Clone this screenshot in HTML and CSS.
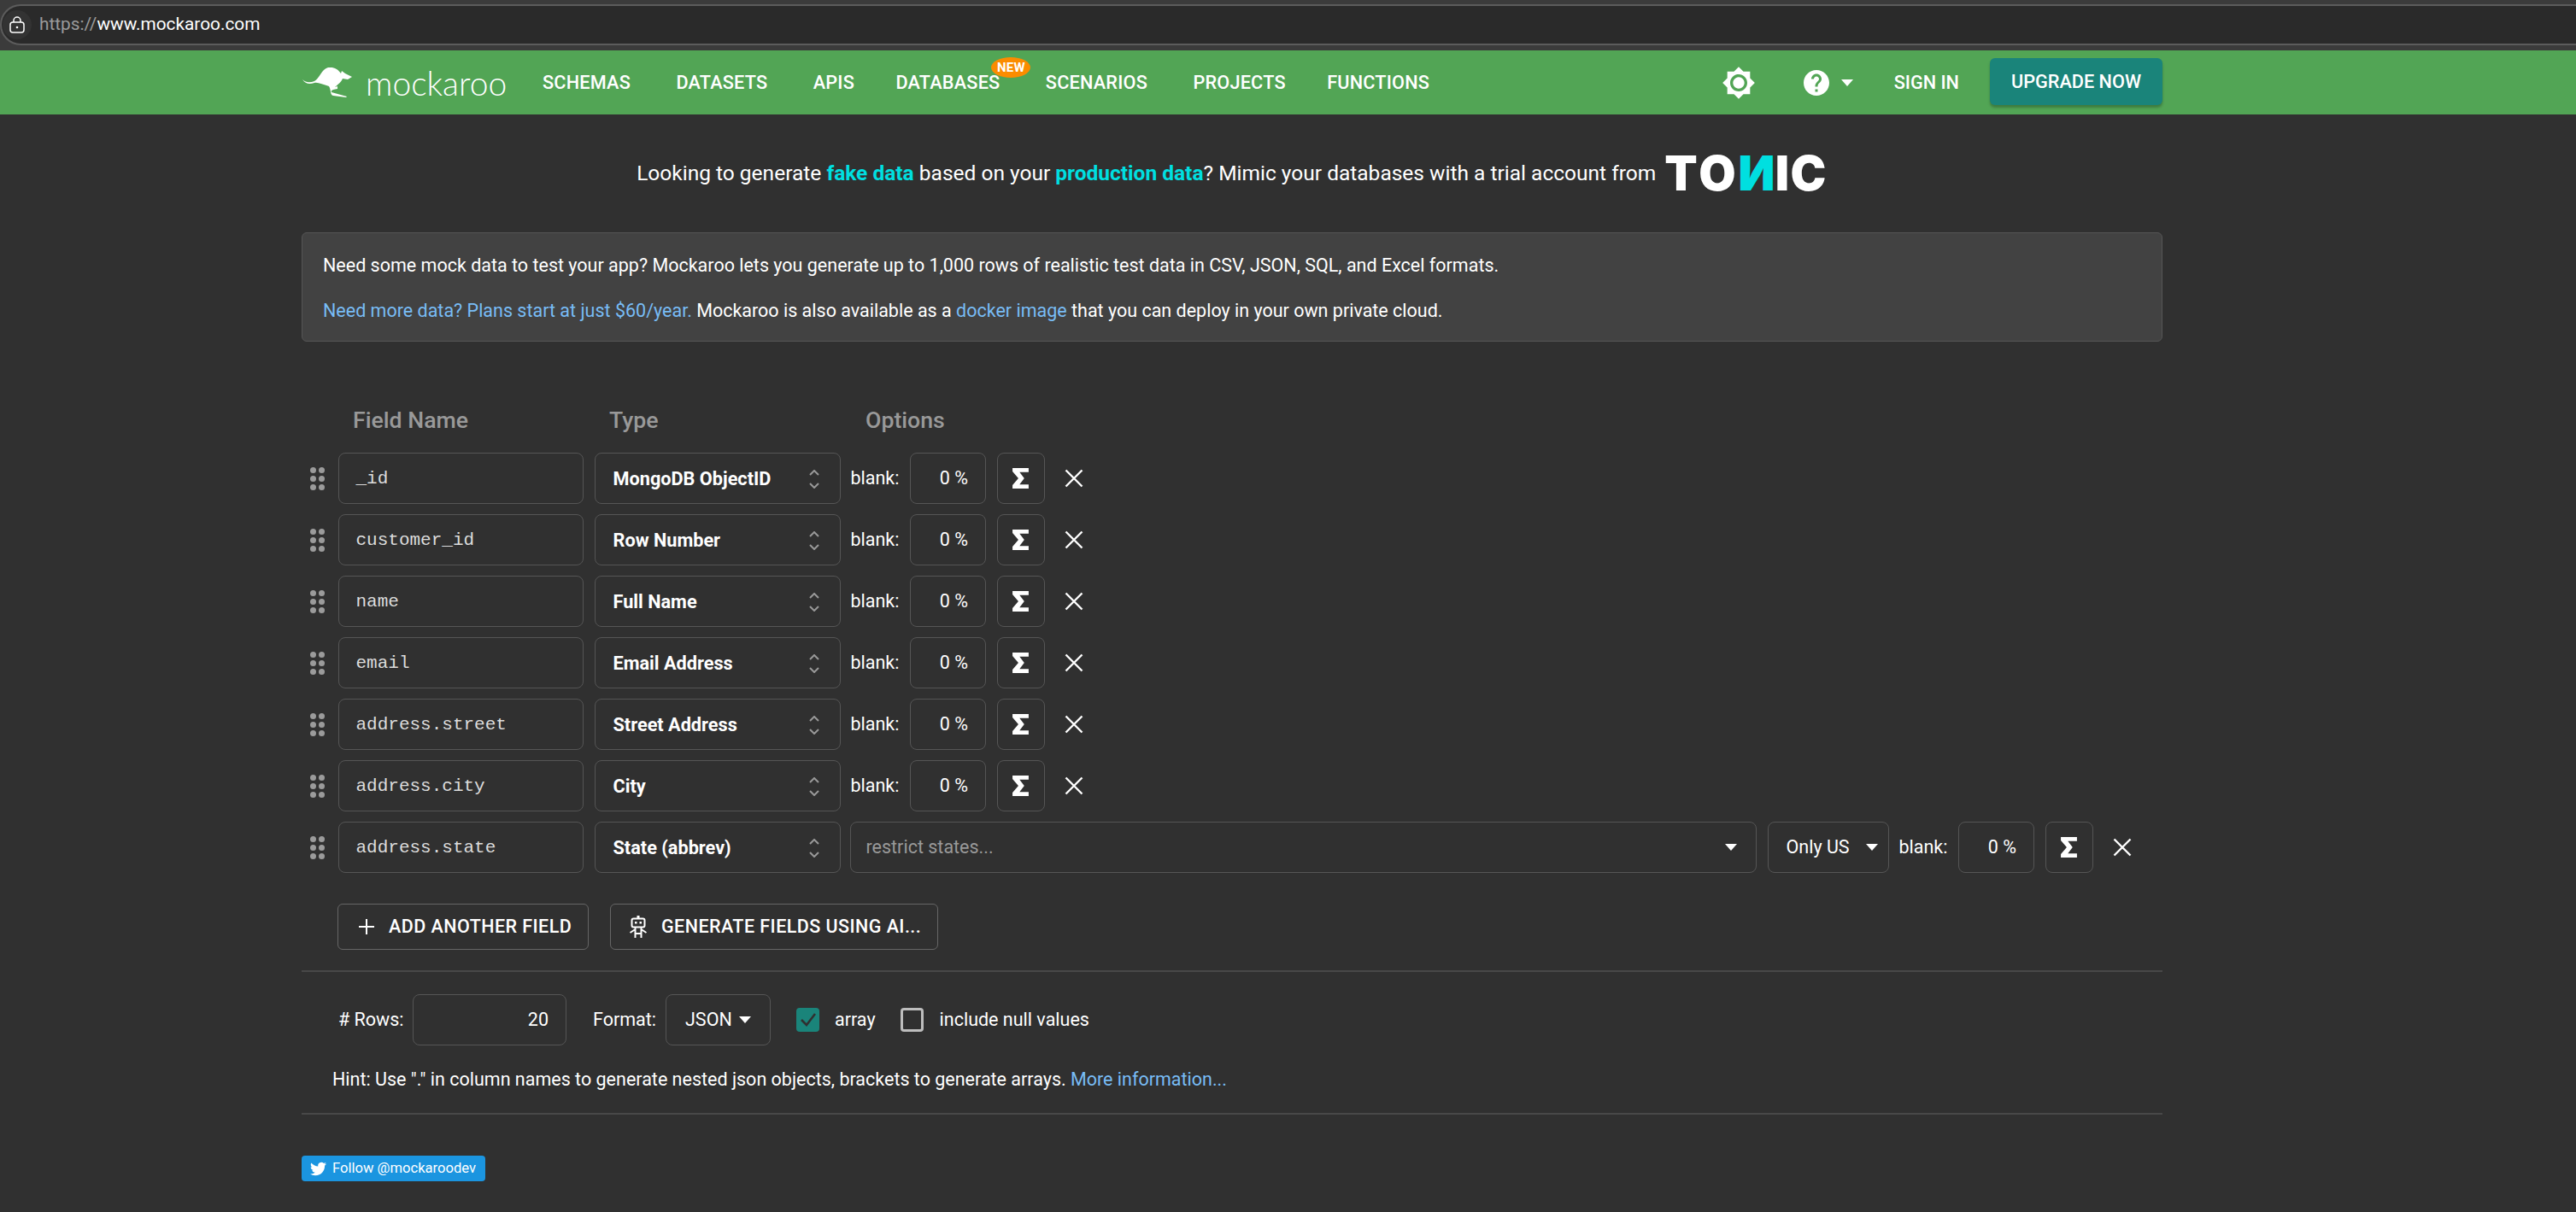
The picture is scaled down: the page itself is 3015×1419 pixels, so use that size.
FILE: index.html
```html
<!DOCTYPE html>
<html lang="en">
<head>
<meta charset="utf-8">
<title>Mockaroo</title>
<link rel="stylesheet" href="styles.css">
</head>
<body>
<div class="browser">
  <div class="address">
    <span class="lock"><svg width="18" height="20" viewBox="0 0 18 20"><rect x="1" y="7" width="16" height="12" rx="3" fill="none" stroke="#fff" stroke-width="1.500"/><path d="M5 7V5a4 4 0 0 1 8 0v2" fill="none" stroke="#fff" stroke-width="1.500"/><circle cx="9" cy="13" r="1.300" fill="#fff"/></svg></span>
    <span class="url"><span class="scheme">https://</span>www.mockaroo.com</span>
  </div>
</div>
<header class="nav">
  <div class="nav-inner">
    <a class="brand">
      <svg class="roo" width="58" height="35" viewBox="0 0 58 35"><path fill="#fff" d="M0 14C4 18 9 18 14 16C20 13 22 2 30 0C38-1 42 3 45 7L46 4L50 7L58 11L53 14L47 13C45 18 41 20 38 23L41 22L41 25C37 26 33 26 34 29L52 34L51 35L36 33C32 32 34 27 31 22C24 20 18 17 14 18C8 20 3 19 0 14Z"/></svg>
      <span class="wordmark">mockaroo</span>
    </a>
    <nav class="links">
      <a>SCHEMAS</a><a>DATASETS</a><a>APIS</a><a class="has-badge tight">DATABASES<span class="badge">NEW</span></a><a>SCENARIOS</a><a>PROJECTS</a><a class="tight">FUNCTIONS</a>
    </nav>
    <div class="nav-right">
      <svg class="sun" width="40" height="40" viewBox="0 0 24 24"><path fill="#fff" d="M20 8.690V4h-4.690L12 .69 8.690 4H4v4.690L.69 12 4 15.310V20h4.690L12 23.310 15.310 20H20v-4.690L23.310 12 20 8.690zM12 18c-3.310 0-6-2.690-6-6s2.690-6 6-6 6 2.690 6 6-2.690 6-6 6zm0-10c-2.210 0-4 1.790-4 4s1.790 4 4 4 4-1.790 4-4-1.790-4-4-4z"/></svg>
      <svg class="help" width="36" height="36" viewBox="0 0 24 24"><path fill="#fff" d="M12 2C6.480 2 2 6.480 2 12s4.480 10 10 10 10-4.480 10-10S17.520 2 12 2zm1 17h-2v-2h2v2zm2.070-7.750l-.9.92C13.450 12.900 13 13.500 13 15h-2v-.5c0-1.100.45-2.100 1.170-2.830l1.240-1.260c.37-.36.59-.86.59-1.410 0-1.100-.9-2-2-2s-2 .9-2 2H8c0-2.210 1.790-4 4-4s4 1.790 4 4c0 .88-.36 1.680-.93 2.250z"/></svg>
      <span class="caret help-caret"></span>
      <a class="signin">SIGN IN</a>
      <a class="upgrade">UPGRADE NOW</a>
    </div>
  </div>
</header>
<main class="page">
  <div class="promo">
    <span>Looking to generate <b class="cy">fake data</b> based on your <b class="cy">production data</b>? Mimic your databases with a trial account from</span>
    <span class="tonic"><span>T</span><span>O</span><span class="tonic-n">N</span><span>I</span><span>C</span></span>
  </div>
  <section class="info">
    <p>Need some mock data to test your app? Mockaroo lets you generate up to 1,000 rows of realistic test data in CSV, JSON, SQL, and Excel formats.</p>
    <p><a class="link">Need more data? Plans start at just $60/year.</a> Mockaroo is also available as a <a class="link">docker image</a> that you can deploy in your own private cloud.</p>
  </section>
  <div class="heads"><span class="h-name">Field Name</span><span class="h-type">Type</span><span>Options</span></div>
  <div class="rows">
    <div class="row">
      <span class="grip"><i></i><i></i><i></i><i></i><i></i><i></i></span>
      <div class="box name">_id</div>
      <div class="box type">MongoDB ObjectID<svg class="updown" width="12" height="22" viewBox="0 0 12 22"><path d="M1 6l5-5 5 5M1 16l5 5 5-5" fill="none" stroke="#999" stroke-width="2"/></svg></div>
      <span class="lbl">blank:</span><div class="box pct">0 %</div>
      <div class="box sigma"><svg width="19" height="24" viewBox="0 0 55 70"><path fill="#fff" d="M0 0H55V14H24L40 35L24 56H55V70H0V58L20 35L0 12Z"/></svg></div>
      <span class="x"><svg width="22" height="22" viewBox="0 0 22 22"><path d="M1.500 1.500l19 19M20.500 1.500l-19 19" stroke="#fff" stroke-width="2.400"/></svg></span>
    </div>
    <div class="row">
      <span class="grip"><i></i><i></i><i></i><i></i><i></i><i></i></span>
      <div class="box name">customer_id</div>
      <div class="box type">Row Number<svg class="updown" width="12" height="22" viewBox="0 0 12 22"><path d="M1 6l5-5 5 5M1 16l5 5 5-5" fill="none" stroke="#999" stroke-width="2"/></svg></div>
      <span class="lbl">blank:</span><div class="box pct">0 %</div>
      <div class="box sigma"><svg width="19" height="24" viewBox="0 0 55 70"><path fill="#fff" d="M0 0H55V14H24L40 35L24 56H55V70H0V58L20 35L0 12Z"/></svg></div>
      <span class="x"><svg width="22" height="22" viewBox="0 0 22 22"><path d="M1.500 1.500l19 19M20.500 1.500l-19 19" stroke="#fff" stroke-width="2.400"/></svg></span>
    </div>
    <div class="row">
      <span class="grip"><i></i><i></i><i></i><i></i><i></i><i></i></span>
      <div class="box name">name</div>
      <div class="box type">Full Name<svg class="updown" width="12" height="22" viewBox="0 0 12 22"><path d="M1 6l5-5 5 5M1 16l5 5 5-5" fill="none" stroke="#999" stroke-width="2"/></svg></div>
      <span class="lbl">blank:</span><div class="box pct">0 %</div>
      <div class="box sigma"><svg width="19" height="24" viewBox="0 0 55 70"><path fill="#fff" d="M0 0H55V14H24L40 35L24 56H55V70H0V58L20 35L0 12Z"/></svg></div>
      <span class="x"><svg width="22" height="22" viewBox="0 0 22 22"><path d="M1.500 1.500l19 19M20.500 1.500l-19 19" stroke="#fff" stroke-width="2.400"/></svg></span>
    </div>
    <div class="row">
      <span class="grip"><i></i><i></i><i></i><i></i><i></i><i></i></span>
      <div class="box name">email</div>
      <div class="box type">Email Address<svg class="updown" width="12" height="22" viewBox="0 0 12 22"><path d="M1 6l5-5 5 5M1 16l5 5 5-5" fill="none" stroke="#999" stroke-width="2"/></svg></div>
      <span class="lbl">blank:</span><div class="box pct">0 %</div>
      <div class="box sigma"><svg width="19" height="24" viewBox="0 0 55 70"><path fill="#fff" d="M0 0H55V14H24L40 35L24 56H55V70H0V58L20 35L0 12Z"/></svg></div>
      <span class="x"><svg width="22" height="22" viewBox="0 0 22 22"><path d="M1.500 1.500l19 19M20.500 1.500l-19 19" stroke="#fff" stroke-width="2.400"/></svg></span>
    </div>
    <div class="row">
      <span class="grip"><i></i><i></i><i></i><i></i><i></i><i></i></span>
      <div class="box name">address.street</div>
      <div class="box type">Street Address<svg class="updown" width="12" height="22" viewBox="0 0 12 22"><path d="M1 6l5-5 5 5M1 16l5 5 5-5" fill="none" stroke="#999" stroke-width="2"/></svg></div>
      <span class="lbl">blank:</span><div class="box pct">0 %</div>
      <div class="box sigma"><svg width="19" height="24" viewBox="0 0 55 70"><path fill="#fff" d="M0 0H55V14H24L40 35L24 56H55V70H0V58L20 35L0 12Z"/></svg></div>
      <span class="x"><svg width="22" height="22" viewBox="0 0 22 22"><path d="M1.500 1.500l19 19M20.500 1.500l-19 19" stroke="#fff" stroke-width="2.400"/></svg></span>
    </div>
    <div class="row">
      <span class="grip"><i></i><i></i><i></i><i></i><i></i><i></i></span>
      <div class="box name">address.city</div>
      <div class="box type">City<svg class="updown" width="12" height="22" viewBox="0 0 12 22"><path d="M1 6l5-5 5 5M1 16l5 5 5-5" fill="none" stroke="#999" stroke-width="2"/></svg></div>
      <span class="lbl">blank:</span><div class="box pct">0 %</div>
      <div class="box sigma"><svg width="19" height="24" viewBox="0 0 55 70"><path fill="#fff" d="M0 0H55V14H24L40 35L24 56H55V70H0V58L20 35L0 12Z"/></svg></div>
      <span class="x"><svg width="22" height="22" viewBox="0 0 22 22"><path d="M1.500 1.500l19 19M20.500 1.500l-19 19" stroke="#fff" stroke-width="2.400"/></svg></span>
    </div>
    <div class="row">
      <span class="grip"><i></i><i></i><i></i><i></i><i></i><i></i></span>
      <div class="box name">address.state</div>
      <div class="box type">State (abbrev)<svg class="updown" width="12" height="22" viewBox="0 0 12 22"><path d="M1 6l5-5 5 5M1 16l5 5 5-5" fill="none" stroke="#999" stroke-width="2"/></svg></div>
      <div class="box restrict"><span>restrict states...</span><span class="caret"></span></div>
      <div class="box only">Only US<span class="caret"></span></div>
      <span class="lbl">blank:</span><div class="box pct">0 %</div>
      <div class="box sigma"><svg width="19" height="24" viewBox="0 0 55 70"><path fill="#fff" d="M0 0H55V14H24L40 35L24 56H55V70H0V58L20 35L0 12Z"/></svg></div>
      <span class="x"><svg width="22" height="22" viewBox="0 0 22 22"><path d="M1.500 1.500l19 19M20.500 1.500l-19 19" stroke="#fff" stroke-width="2.400"/></svg></span>
    </div>
  </div>
  <div class="actions">
    <a class="btn btn-add"><svg width="18" height="18" viewBox="0 0 18 18"><path d="M9 0v18M0 9h18" stroke="#fff" stroke-width="2"/></svg>ADD ANOTHER FIELD</a>
    <a class="btn btn-ai"><svg width="20" height="26" viewBox="0 0 20 26"><rect x="8.500" y="0" width="3" height="3" fill="#fff"/><rect x="2.500" y="3.500" width="15" height="10" rx="2" fill="none" stroke="#fff" stroke-width="2"/><rect x="6" y="7" width="2.500" height="2.500" fill="#fff"/><rect x="11.500" y="7" width="2.500" height="2.500" fill="#fff"/><path d="M6.500 14v12M13.500 14v12M6.500 21h7M6.500 16l-6 4M13.500 16l6 4" fill="none" stroke="#fff" stroke-width="2"/></svg>GENERATE FIELDS USING AI...</a>
  </div>
  <hr class="rule thin">
  <div class="opts">
    <span class="o-rows">#&nbsp;Rows:</span>
    <div class="box count">20</div>
    <span class="o-format">Format:</span>
    <div class="box fmt">JSON<span class="caret"></span></div>
    <span class="check on"><svg width="20" height="18" viewBox="0 0 20 18"><path d="M2 9l6 6L18 2" fill="none" stroke="#303030" stroke-width="2.500"/></svg></span>
    <span class="c-label">array</span>
    <span class="check"></span>
    <span class="c-label">include null values</span>
  </div>
  <p class="hint">Hint: Use "." in column names to generate nested json objects, brackets to generate arrays. <a class="link">More information...</a></p>
  <hr class="rule thick">
  <a class="tweet"><svg width="19" height="19" viewBox="0 0 24 24"><path fill="#fff" d="M23.953 4.570a10 10 0 01-2.825.775 4.958 4.958 0 002.163-2.723c-.951.555-2.005.959-3.127 1.184a4.920 4.920 0 00-8.384 4.482C7.690 8.095 4.067 6.130 1.640 3.162a4.822 4.822 0 00-.666 2.475c0 1.710.87 3.213 2.188 4.096a4.904 4.904 0 01-2.228-.616v.06a4.923 4.923 0 003.946 4.827 4.996 4.996 0 01-2.212.085 4.936 4.936 0 004.604 3.417 9.867 9.867 0 01-6.102 2.105c-.39 0-.779-.023-1.170-.067a13.995 13.995 0 007.557 2.209c9.053 0 13.998-7.496 13.998-13.985 0-.21 0-.42-.015-.63A9.935 9.935 0 0024 4.590z"/></svg><span class="tweet-text">Follow @mockaroodev</span></a>
</main>
</body>
</html>
```
FILE: styles.css
```css
* { box-sizing: border-box; }
html, body { margin: 0; padding: 0; }
body {
  background: #303030;
  color: #fff;
  font-family: Roboto, "Liberation Sans", sans-serif;
  font-size: 21.500px;
  line-height: 31.5px;
  height: 1419px;
  overflow: hidden;
}
p { margin: 0; }

.browser { height: 59px; background: #3b3b3b; padding-top: 5px; }
.address {
  height: 48px;
  background: #2a2a2a;
  border: 2px solid #5c5c5c;
  border-right: 0;
  border-radius: 24px 0 0 24px;
  display: flex;
  align-items: center;
  padding-left: 1px;
}
.lock { width: 34px; height: 34px; background: #333; border-radius: 50%; display: flex; align-items: center; justify-content: center; flex: none; }
.url { margin-left: 9px; font-size: 20.800px; color: #fff; }
.scheme { color: #9a9a9a; }

.nav { height: 75px; background: #52a555; padding-left: 353px; }
.nav-inner { width: 2178px; height: 100%; display: flex; align-items: center; }
.brand { display: flex; align-items: center; width: 282px; }
.roo { margin-left: 1px; }
.wordmark {
  margin-left: 16px;
  font-family: Lato, sans-serif;
  font-weight: 300;
  font-size: 39px;
  line-height: 46px;
  color: #fff;
}
.links { display: flex; gap: 53.400px; font-size: 21.700px; font-weight: 500; letter-spacing: 0.200px; }
.tight { margin-left: -5px; }
.has-badge { position: relative; }
.badge {
  position: absolute;
  left: 112px;
  top: -14px;
  width: 46px;
  height: 24px;
  border-radius: 23px / 12px;
  background: #fb8c00;
  font-size: 15px;
  line-height: 24px;
  font-weight: 700;
  text-align: center;
}
.nav-right { margin-left: auto; display: flex; align-items: center; font-size: 21.700px; font-weight: 500; }
.sun { margin-right: 53px; }
.help { margin-right: 11px; }
.caret { display: inline-block; width: 0; height: 0; border-left: 7px solid transparent; border-right: 7px solid transparent; border-top: 8px solid #fff; }
.help-caret { margin-right: 48px; }
.signin { margin-right: 36px; }
.upgrade {
  width: 202px;
  height: 55px;
  background: #1a847a;
  border-radius: 6px;
  box-shadow: 0 3px 3px rgba(0,0,0,.25);
  display: flex;
  align-items: center;
  justify-content: center;
  margin-top: -2px;
}

.page { margin-left: 353px; width: 2178px; }
.promo { height: 138px; display: flex; align-items: center; justify-content: center; gap: 10px; font-size: 24.500px; }
.cy { color: #00dfe0; font-weight: 700; }
.tonic {
  display: flex;
  font-family: Inter, sans-serif;
  font-weight: 900;
  font-size: 56px;
  line-height: 40px;
  letter-spacing: 1.500px;
}
.tonic-n { color: #00dfe0; transform: scaleX(-1); }

.info {
  height: 128px;
  background: #424242;
  border: 1px solid #555;
  border-radius: 6px;
  padding: 22px 24px 20px;
}
.info p + p { margin-top: 21px; }
.link { color: #78bcf5; }

.heads {
  margin-top: 74px;
  height: 36px;
  line-height: 36px;
  padding-left: 60px;
  display: flex;
  font-size: 26.700px;
  font-weight: 500;
  color: #999;
}
.h-name { width: 300px; }
.h-type { width: 300px; }

.rows { margin-top: 20px; display: flex; flex-direction: column; gap: 12px; }
.row { height: 60px; display: flex; align-items: center; }
.grip { width: 42.500px; padding-left: 10px; display: grid; grid-template-columns: 7px 7px; gap: 3px; column-gap: 3px; }
.grip i { width: 7px; height: 7px; border-radius: 50%; background: #9b9b9b; }
.box {
  height: 60px;
  border: 1.500px solid #555;
  border-radius: 8px;
  display: flex;
  align-items: center;
  flex: none;
}
.name {
  width: 287px;
  padding: 1px 0 0 20px;
  font-family: "Liberation Mono", monospace;
  font-size: 21px;
  color: #dcdcdc;
}
.type {
  width: 288px;
  margin-left: 13px;
  padding: 1px 24px 0 21px;
  font-weight: 700;
  font-size: 21.700px;
  justify-content: space-between;
}
.lbl { margin: 0 13px 0 12px; width: 56px; flex: none; }
.pct { width: 89.500px; justify-content: flex-end; padding-right: 20px; }
.sigma { width: 56px; margin-left: 12.500px; justify-content: center; }
.x { width: 40px; margin-left: 14px; display: flex; justify-content: center; }
.restrict { width: 1061px; margin-left: 11px; padding: 0 22px 0 18px; justify-content: space-between; color: #999; }
.only { width: 142px; margin-left: 13px; padding: 0 12px 0 21px; justify-content: space-between; }

.actions { margin: 36px 0 0 42px; display: flex; gap: 25px; }
.btn {
  height: 54px;
  border: 1.500px solid #666;
  border-radius: 6px;
  display: flex;
  align-items: center;
  font-weight: 500;
  font-size: 21.500px;
  letter-spacing: 0.450px;
}
.btn-add { width: 294px; padding-left: 24px; gap: 17px; }
.btn-ai { width: 384px; padding-left: 22px; gap: 17px; }

.rule { margin: 0; border: 0; background: #484848; }
.thin { height: 1.500px; margin-top: 24px; }
.thick { height: 2px; margin-top: 24px; }

.opts { margin-top: 26px; height: 60px; padding-left: 43px; display: flex; align-items: center; }
.o-rows { width: 87px; flex: none; }
.count { width: 180px; justify-content: flex-end; padding-right: 20px; }
.o-format { margin-left: 31px; width: 85px; flex: none; }
.fmt { width: 123px; padding: 0 22px; justify-content: space-between; }
.check {
  width: 27px;
  height: 28px;
  border: 3px solid #bdbdbd;
  border-radius: 4px;
  display: flex;
  align-items: center;
  justify-content: center;
  flex: none;
  margin-left: 30px;
}
.check.on { background: #1a847a; border-color: #1a847a; margin-left: 30px; }
.c-label { margin-left: 19px; }
.check.on + .c-label { margin-left: 18px; }
.c-label + .check { margin-left: 29px; }

.hint { margin: 24px 0 0 36px; }
.tweet {
  margin-top: 48px;
  width: 215px;
  height: 30px;
  background: #1b95e0;
  border-radius: 4px;
  display: flex;
  align-items: center;
  gap: 7px;
  padding-left: 10px;
  font-size: 16.600px;
}
.tweet-text { white-space: nowrap; }
```
